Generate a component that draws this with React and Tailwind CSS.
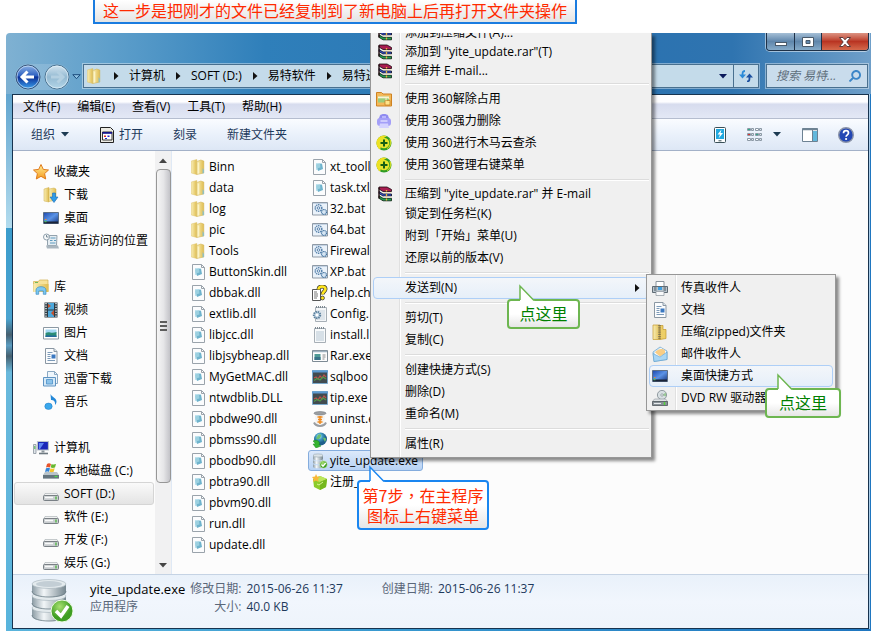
import { FaSearch } from "react-icons/fa";

const Gradients = () => (
  <svg className="absolute h-0 w-0" aria-hidden="true">
    <defs>
      <linearGradient id="folder" x1="0" x2="1">
        <stop offset="0" stopColor="#f9eeb4" />
        <stop offset="1" stopColor="#dfbc50" />
      </linearGradient>
      <linearGradient id="orb" x1="0" y1="0" x2="0" y2="1">
        <stop offset="0" stopColor="#8fb4e6" />
        <stop offset=".45" stopColor="#2c5fc0" />
        <stop offset=".5" stopColor="#0c2f96" />
        <stop offset="1" stopColor="#3ba2ee" />
      </linearGradient>
      <linearGradient id="orbOff" x1="0" y1="0" x2="0" y2="1">
        <stop offset="0" stopColor="#d5e6f0" />
        <stop offset=".5" stopColor="#94bad2" />
        <stop offset="1" stopColor="#b4d6e8" />
      </linearGradient>
      <linearGradient id="screen" x1="0" y1="0" x2="1" y2="1">
        <stop offset="0" stopColor="#1c48ad" />
        <stop offset=".5" stopColor="#5b93e6" />
        <stop offset="1" stopColor="#16357c" />
      </linearGradient>
      <linearGradient id="metal" x1="0" x2="1">
        <stop offset="0" stopColor="#8a9aa3" />
        <stop offset=".35" stopColor="#f2f6f8" />
        <stop offset="1" stopColor="#75868f" />
      </linearGradient>
      <linearGradient id="star" x1="0" y1="0" x2="0" y2="1">
        <stop offset="0" stopColor="#fff09a" />
        <stop offset="1" stopColor="#f59a1c" />
      </linearGradient>
      <linearGradient id="note" x1="0" y1="0" x2="0" y2="1">
        <stop offset="0" stopColor="#1c6fc4" />
        <stop offset="1" stopColor="#3fb0f0" />
      </linearGradient>
      <radialGradient id="globe" cx=".4" cy=".3">
        <stop offset="0" stopColor="#d8f2ff" />
        <stop offset=".5" stopColor="#3f9bc0" />
        <stop offset="1" stopColor="#1d5f8c" />
      </radialGradient>
      <radialGradient id="tick" cx=".4" cy=".3">
        <stop offset="0" stopColor="#a8e070" />
        <stop offset="1" stopColor="#3f9e22" />
      </radialGradient>
    </defs>
  </svg>
);

const Svg = ({ children, className = "h-4 w-4" }) => (
  <svg viewBox="0 0 16 16" className={`${className} shrink-0`} fill="none" aria-hidden="true">
    {children}
  </svg>
);

const icons = {
  folder: (
    <>
      <path d="M.300 2l5.500-1.500v15L.300 14z" fill="url(#folder)" stroke="#dcc269" strokeWidth=".5" />
      <path d="M5.800 2.500l4-1.500 3 1v12l-7 1.500z" fill="url(#folder)" stroke="#cfae4c" strokeWidth=".5" />
      <path d="M7.500 3.500v11" stroke="#fbf3c8" strokeWidth="1.500" />
      <path d="M11.500 9l1.500 2v3l-1.500.500z" fill="#8fc0c4" />
    </>
  ),
  dll: (
    <>
      <path d="M1.500 .500h9l3 3v12h-12z" fill="#fbfcfd" stroke="#9aa3ab" />
      <path d="M10.500 .500v3h3" stroke="#9aa3ab" />
      <path d="M4 4h5v7H4z" fill="#bfe2ee" />
      <path d="M5 6l5-1.500 1 5.500-5 2z" fill="#6fb3cc" />
      <path d="M4 5.500l4-1 .5 4-4 1z" fill="#9bd0e0" />
    </>
  ),
  bat: (
    <>
      <path d="M.500 1.500h15v12.500h-15z" fill="#eaf2fa" stroke="#8f9aa6" />
      <path d="M1 2.500h14" stroke="#c3d3e4" />
      <circle cx="6.500" cy="7" r="3.300" stroke="#5a84ad" strokeWidth="1.500" strokeDasharray="1.400 .700" />
      <circle cx="6.500" cy="7" r="1.300" stroke="#5a84ad" />
      <circle cx="12" cy="11" r="2.500" fill="#d6e6f4" stroke="#44739f" strokeWidth="1.200" strokeDasharray="1.200 .500" />
    </>
  ),
  help: (
    <>
      <path d="M.500 4.500h8v11h-8z" fill="#fff" stroke="#555" />
      <path d="M2 7h3M2 9h4M2 11h4M2 13h3" stroke="#777" />
      <path d="M6.500 4.500c0-4 7-4 7-.500 0 2.500-3 2.500-3 5.500" stroke="#333" strokeWidth="4" />
      <path d="M6.500 4.500c0-4 7-4 7-.500 0 2.500-3 2.500-3 5.500" stroke="#ffe51f" strokeWidth="2.600" />
      <circle cx="10.500" cy="13" r="1.900" fill="#ffe51f" stroke="#333" strokeWidth=".800" />
    </>
  ),
  config: (
    <>
      <path d="M3.500 1.500h11v14h-11z" fill="#f4f6f8" stroke="#a7afb6" />
      <path d="M4 1h10" stroke="#7e8991" strokeWidth="2" strokeDasharray="1 1" />
      <path d="M5 5h8M5 7h8M5 9h8M5 11h8M5 13h8" stroke="#b5c6d4" strokeWidth=".700" />
      <circle cx="5" cy="9" r="3.200" fill="#c6d9e8" stroke="#5a7f9c" strokeWidth="2" strokeDasharray="1.400 .800" />
      <circle cx="5" cy="9" r="1.200" fill="#fff" />
    </>
  ),
  text: (
    <>
      <path d="M2.500 1.500h11v14h-11z" fill="#f8fafb" stroke="#a7afb6" />
      <path d="M3 1h10" stroke="#7e8991" strokeWidth="2" strokeDasharray="1 1" />
      <path d="M4 5h8M4 7h8M4 9h8M4 11h8M4 13h8" stroke="#a5b9ca" strokeWidth=".800" />
    </>
  ),
  rarExe: (
    <>
      <path d="M.500 2.500h15v11h-15z" fill="#fdfdfd" stroke="#7d8a94" />
      <path d="M1 3.500h14" stroke="#9fb2c0" strokeWidth="1.500" />
      <path d="M2.500 6h6v6h-6z" fill="#4f9a96" />
      <path d="M2.500 9h6v3h-6z" fill="#397388" />
      <path d="M10.500 7h3M10.500 9h3M10.500 11h2" stroke="#888" />
    </>
  ),
  chart: (
    <>
      <path d="M.500 1.500h15v13h-15z" fill="#414b50" stroke="#7aa9cc" />
      <path d="M0 2.500h16" stroke="#5c9ad1" strokeWidth="2" />
      <path d="M2 9l2-1 2 2 2-3 2 2 2-3 2 2" stroke="#b9534a" strokeWidth="1.200" />
      <path d="M2 11.500l3-2 3 1.500 3-3 3 2" stroke="#4f9a4a" strokeWidth="1.200" />
    </>
  ),
  uninst: (
    <>
      <ellipse cx="8" cy="2.300" rx="6" ry="1.800" fill="#9a9ea2" stroke="#6d7276" strokeWidth=".500" />
      <path d="M3 5l1 8h8l1-8z" fill="#f4f4f4" />
      <path d="M5.500 6h5M6 8.500h4M5.500 11h5M8 5v8" stroke="#ef8a1d" strokeWidth="1.500" />
      <path d="M2 11.500c2 4.500 10 4.500 12 0" stroke="#9a9ea2" strokeWidth="2" />
    </>
  ),
  update: (
    <>
      <circle cx="8.500" cy="7" r="6.500" fill="url(#globe)" />
      <path d="M6 3c3-2 4 1 2 3s-2 1-4 1zM11 6c3-1 4 1 2 4z" fill="#6cc26b" />
      <path d="M1 9c4-2 8 1 6 4l2 1-5 2-3-4 2 0c0-1-1-2-2-3z" fill="#35b32f" stroke="#1c8d1c" strokeWidth=".500" />
    </>
  ),
  database: (
    <>
      <path d="M1 2.500v3.500c0 2 10 2 10 0V2.500z" fill="url(#metal)" />
      <path d="M1 6.800v3c0 2 10 2 10 0v-3c0 2-10 2-10 0z" fill="url(#metal)" />
      <path d="M1 10.800v3c0 2 10 2 10 0v-3c0 2-10 2-10 0z" fill="url(#metal)" />
      <ellipse cx="6" cy="2.500" rx="5" ry="1.600" fill="#dbe3e7" stroke="#8b9aa3" strokeWidth=".500" />
      <circle cx="11.500" cy="11.500" r="3.800" fill="url(#tick)" stroke="#e8f8df" strokeWidth=".500" />
      <path d="M9.500 11.500l1.500 1.700 2.700-3.200" stroke="#fff" strokeWidth="1.300" />
    </>
  ),
  register: (
    <>
      <path d="M1 5l7-3 7 3-1 8-6 3-6-3z" fill="#8ccb2a" />
      <path d="M1 5l7 3 7-3-7-3z" fill="#bce65c" />
      <path d="M8 8l7-3-1 8-6 3z" fill="#76b81e" />
      <path d="M4 0l1.200 2.500L8 3 6 5l.5 3L4 6.500 1 8l.700-3L0 3l3-.500z" fill="#f8b838" />
      <path d="M5 10l2 1 4-3" stroke="#d9f59a" />
    </>
  ),
  star: <path d="M8 .500l2.300 4.900 5.200.600-3.900 3.600 1.100 5.400-4.700-2.700L3.300 15l1.100-5.400L.500 6l5.200-.600z" fill="url(#star)" stroke="#e07b1c" />,
  download: (
    <>
      <path d="M1 2l5-1.500v14.500l-5-1z" fill="url(#folder)" stroke="#cfae4c" strokeWidth=".500" />
      <path d="M6 2l5-1 2 1v11l-7 1.500z" fill="url(#folder)" stroke="#cfae4c" strokeWidth=".500" />
      <path d="M9.500 6h3v4h2.500l-4 5.500-4-5.500h2.500z" fill="#2f9be8" stroke="#1a6db8" strokeWidth=".600" />
    </>
  ),
  desktop: (
    <>
      <path d="M.500 2.500h15v11h-15z" fill="url(#screen)" stroke="#5d6f86" />
      <path d="M1 12.500h14" stroke="#1b2438" strokeWidth="2" />
      <path d="M1.500 11.500h2" stroke="#4fc05e" strokeWidth="1.500" />
      <path d="M2 9.500h1.500" stroke="#f08a2c" />
    </>
  ),
  recent: (
    <>
      <path d="M4.500 2.500h9.500l-.500 10h-9z" fill="#e5edf2" stroke="#93a2ad" />
      <path d="M3 12.500h12l1 3H4z" fill="#aab6bf" />
      <circle cx="3.500" cy="4" r="3" fill="#f7f9fa" stroke="#8fa0ac" />
      <path d="M3.500 2v2h2" stroke="#5d7483" strokeWidth=".800" />
      <path d="M7.500 5h5M7 7.500h2.500M11 7.500h2M7 10h5.500" stroke="#5f9cc0" strokeWidth="1.200" />
    </>
  ),
  library: (
    <>
      <path d="M.500 2.500h5l1-1.500h8.500v11.500H.500z" fill="#f6e29a" stroke="#d3b04d" strokeWidth=".700" />
      <path d="M2 3.500h3" stroke="#74b95c" />
      <path d="M.500 5h15v8h-15z" fill="url(#folder)" />
      <path d="M3 15.300v-4.300c0-4.500 10-4.500 10 0v4.300h-2.700V12H5.700v3.300z" fill="#7cc7f0" stroke="#2c83bd" strokeWidth=".600" />
    </>
  ),
  video: (
    <>
      <path d="M1.500 .500h13v15h-13z" fill="#2c3a42" />
      <path d="M5 1h6v6.500h-6zM5 8.500h6v6.500h-6z" fill="#4ba8dc" />
      <path d="M5 1.500l3 2.500-3 2zM11 8l-3 3 3 3z" fill="#c2512e" />
      <path d="M3 1v14M13 1v14" stroke="#e8eef0" strokeWidth="1.400" strokeDasharray="1.300 1.200" />
    </>
  ),
  picture: (
    <>
      <path d="M.500 2.500h15v11.500h-15z" fill="#fff" stroke="#8c99a3" />
      <path d="M2.500 4.500h11v3.500h-11z" fill="#a4d8f4" />
      <path d="M2.500 8c4-2 5 1 11-1v5h-11z" fill="#2b8d76" />
      <path d="M2.500 10.500c4-1 7 .500 11 0v1.500h-11z" fill="#236a9c" />
    </>
  ),
  doc: (
    <>
      <path d="M2.500 .500h8.500l3 3v12h-11.500z" fill="#fbfcfd" stroke="#8a97a3" />
      <path d="M11 .500v3h3" fill="#dbe5ec" stroke="#8a97a3" />
      <path d="M4.500 4.500h5M4.500 6.500h3M4.500 8.500h3M4.500 10.500h3M4.500 12.500h7.500" stroke="#6d8eb0" strokeWidth=".900" />
      <path d="M8.500 6.500h4v4h-4z" fill="#3a78c0" />
    </>
  ),
  thunder: (
    <>
      <path d="M4.500 .500h7l3 3v9h-10z" fill="#eef6fc" stroke="#8ba9c3" />
      <path d="M11.500 .500v3h3" stroke="#8ba9c3" />
      <path d="M.500 6.500h12v8.500h-12z" fill="#d5e9f7" stroke="#5e93c2" />
      <path d="M3.500 8.500h6v4.500h-6z" fill="#8cc3ea" stroke="#4c8fc8" strokeWidth=".800" />
    </>
  ),
  music: (
    <>
      <path d="M8.200 .500v11.500" stroke="url(#note)" strokeWidth="1.800" />
      <path d="M7.500 0c1 3 6.500 4 6 8-.5 2-1 2-1.500 3 .5-4-1.500-5-4-5z" fill="#2388d8" />
      <ellipse cx="5.500" cy="12.300" rx="3.700" ry="3.200" fill="#3ba8ec" stroke="#1d78c4" strokeWidth=".500" />
    </>
  ),
  computer: (
    <>
      <path d="M4.500 1.500h11v8.500h-11z" fill="#1a27b8" stroke="#bcc5cb" strokeWidth="1.200" />
      <path d="M6 3l5 0-4 6H6z" fill="#5f86f0" />
      <path d="M8.500 10.500h3v2h-3z" fill="#8c969d" />
      <path d="M6 13.500h9" stroke="#6d7880" strokeWidth="1.600" />
      <path d="M.500 4.500h2.500v9h-2.500z" fill="#dfe5e9" stroke="#8b969e" strokeWidth=".800" />
      <path d="M1.800 6v3" stroke="#48b848" />
    </>
  ),
  systemDrive: (
    <>
      <path d="M2 9h12l2 3v3.500H0V12z" fill="#b9c4ca" />
      <path d="M0 12h16v3.500H0z" fill="#65757e" />
      <path d="M4 1c2-1.500 3-.500 4 0L7 4.500c-2-1-3-.500-4 0z" fill="#e8542a" />
      <path d="M8.500 1c2 .800 3 .500 4.500 0l-1 3.500c-1.500.700-3 .500-4.300 0z" fill="#66b82e" />
      <path d="M3 5.300c2-1 3-.500 4 0L6 9c-1.500-.800-3-.500-4 0z" fill="#3485d8" />
      <path d="M7.500 5.300c2 .800 3 .500 4.200 0l-1 3.500c-1.500.700-3 .500-4.200 0z" fill="#f7c42a" />
      <path d="M11.500 13.500h3" stroke="#4fd54c" strokeWidth="1.300" />
    </>
  ),
  drive: (
    <>
      <path d="M2 7.500h12l1.500 3h-15z" fill="#f0f1f2" stroke="#a5abaf" strokeWidth=".600" />
      <rect x=".5" y="9.500" width="15" height="5" rx="1" fill="#c9cdd0" stroke="#6e757a" strokeWidth=".900" />
      <path d="M2 11.500h8" stroke="#f9fafa" strokeWidth="1.500" />
      <path d="M13 10.500v3" stroke="#4cb43e" strokeWidth="1.300" />
    </>
  ),
  openExe: (
    <>
      <path d="M1.500 .500h10l3 3v12h-13z" fill="#ecebe4" stroke="#222" />
      <path d="M3.500 5h9.500v8H3.500z" fill="#fff" stroke="#222" strokeWidth=".900" />
      <path d="M3.500 5h9.500v1.800H3.500z" fill="#15158c" />
      <path d="M5 8.500h2v1.500h-2z" fill="#d22" />
      <path d="M8.500 8.500h2v1.500h-2zM6 11h2v1h-2z" fill="#22c" />
    </>
  ),
  rar: (
    <>
      <path d="M3 1h8l4.500 2.500v2H7L3 3z" fill="#a81c50" stroke="#1c0a10" strokeWidth=".800" />
      <path d="M3 5.500L7 8h8.500v2H7L3 7.500z" fill="#3656d6" stroke="#0c0c1c" strokeWidth=".800" />
      <path d="M3 9.800l4 2.500h8.500v2.500H7l-4-2.500z" fill="#1f9c50" stroke="#0a1c0c" strokeWidth=".800" />
      <path d="M7.500 6.500h8M7.500 11h8" stroke="#f2e4c6" />
      <path d="M3 1.500v11" stroke="#241014" strokeWidth="1.400" />
      <path d="M10.500 4v1.500M10.500 8v2M10.500 12.500v2" stroke="#e8b53c" strokeWidth="1.300" />
    </>
  ),
  unlock: (
    <>
      <path d="M.500 1.500h5l1.500 1.500h8.500v12H.500z" fill="#f3b95a" stroke="#cf8222" />
      <path d="M2 5.500h11v6H2z" fill="#9ccc7a" />
      <path d="M2 5.500h11v1.800H2z" fill="#f8f3d6" />
      <path d="M9 9.500h5v4.500H9z" fill="#ffe48a" stroke="#c17a1a" strokeWidth=".700" />
      <path d="M10 9.500V8c0-2 3-2 3 0" stroke="#fff3c0" />
    </>
  ),
  shred: (
    <>
      <path d="M4 2.500c1-2 7-2 8 0l1.500 4h-11z" fill="#8f8bf0" />
      <rect x="1" y="5" width="14" height="8" rx="3" fill="#a49ff8" />
      <path d="M4 10.500h8l1 4.500H3z" fill="#d4d2ff" />
      <path d="M4.500 8h7" stroke="#dcdaff" strokeWidth="1.500" />
      <path d="M6 4h4" stroke="#c9c6ff" strokeWidth="1.500" />
    </>
  ),
  shield: (
    <>
      <circle cx="8" cy="8" r="7.500" fill="#2f9c25" />
      <path d="M.700 10A7.500 7.500 0 0 1 11 1.200C8 2 5 5 5 8s0 5-1 6.500A8 8 0 0 1 .700 10z" fill="#f0e020" />
      <circle cx="8" cy="8" r="5.300" fill="#e6e52c" />
      <path d="M11 13c3-2 4-6 2-9l2 1c1 4-1 8-4 9z" fill="#c6d820" />
      <path d="M8 4.500v7M4.500 8h7" stroke="#146014" strokeWidth="2" />
    </>
  ),
  fax: (
    <>
      <path d="M4 1.500h8v5h-8z" fill="#fff" stroke="#8a949c" />
      <path d="M.500 6.500h15v6h-15z" fill="#b9c4cc" stroke="#5f6b74" />
      <path d="M6 7h4v3h-4z" fill="#3f9fe0" />
      <path d="M2 8h2.500M2 10h2.500M11.500 8h2.500M11.500 10h2.500" stroke="#4d5962" strokeWidth="1.200" />
      <path d="M4 11.500h8v4h-8z" fill="#f8f9fa" stroke="#8a949c" strokeWidth=".700" />
    </>
  ),
  zip: (
    <>
      <path d="M1 1h7v14.500h-7z" fill="url(#folder)" stroke="#c49a2c" strokeWidth=".700" />
      <path d="M8 1.500h3v4h3v9l-6 1z" fill="#edcf68" stroke="#c49a2c" strokeWidth=".700" />
      <path d="M7.500 1v14" stroke="#7f7458" strokeWidth="2.500" strokeDasharray="1.200 1" />
    </>
  ),
  mail: (
    <>
      <path d="M1 6l7-5 7 4v8.500l-13 2z" fill="#cfe7f8" stroke="#6ca4cc" strokeWidth=".700" />
      <path d="M3 6l6-4 5 3.500v3l-6 3-5-3z" fill="#fff" />
      <path d="M3 6.500c2-3 7-5 10-2v3l-5 3z" fill="#f8cd85" />
      <path d="M1 7.500l7 3.500 7-5v7.500l-13 2z" fill="#a9d6f4" stroke="#5b9ccb" strokeWidth=".600" />
    </>
  ),
  dvd: (
    <>
      <circle cx="10" cy="5" r="4.600" fill="#d8dfe2" stroke="#7d898f" strokeWidth=".800" />
      <path d="M10 5l4-2.500v4z" fill="#9ac796" />
      <circle cx="10" cy="5" r="1.200" fill="#fff" stroke="#7d898f" strokeWidth=".700" />
      <path d="M2.500 9h11l2 2.500h-15z" fill="#dfe3e5" stroke="#8e959a" strokeWidth=".600" />
      <path d="M.500 11.500h15v4h-15z" fill="#8a9298" stroke="#4e565b" strokeWidth=".800" />
      <path d="M2 13.500h7" stroke="#e8ebed" />
      <path d="M12.500 12v3" stroke="#54d23c" strokeWidth="1.500" />
    </>
  ),
};

const Icon = ({ name, className }) => <Svg className={className}>{icons[name]}</Svg>;

const DatabaseLarge = () => (
  <svg viewBox="0 0 44 46" className="h-[46px] w-11 shrink-0" fill="none" aria-hidden="true">
    {[28, 16, 4].map((y) => (
      <g key={y}>
        <path d={`M1 ${y + 2}v8c0 7 34 7 34 0v-8z`} fill="url(#metal)" />
        <path d={`M1 ${y + 9}c0 8 34 8 34 0`} stroke="#6c7d86" strokeWidth=".8" />
        <ellipse cx="18" cy={y + 2} rx="17" ry="4.5" fill="#e3eaed" stroke="#a3b0b8" strokeWidth=".6" />
      </g>
    ))}
    <ellipse cx="18" cy="6" rx="13" ry="3" fill="#c3ced5" />
    <circle cx="31" cy="33" r="11" fill="url(#tick)" stroke="#eefae6" />
    <path d="M25 33l5 5 7-10" stroke="#fff" strokeWidth="3.5" />
  </svg>
);

const Caret = ({ className = "text-[#1c3a52]" }) => (
  <svg viewBox="0 0 8 5" className={`h-[5px] w-2 shrink-0 ${className}`} aria-hidden="true">
    <path d="M0 0h8l-4 4.500z" fill="currentColor" />
  </svg>
);

const ArrowRight = () => (
  <svg viewBox="0 0 5 8" className="h-2 w-[5px] shrink-0" aria-hidden="true">
    <path d="M0 0l4.500 4-4.500 4z" fill="#111" />
  </svg>
);

const crumbs = ["计算机", "SOFT (D:)", "易特软件", "易特进"];
const menus = ["文件(F)", "编辑(E)", "查看(V)", "工具(T)", "帮助(H)"];

const groups = [
  {
    title: "收藏夹",
    icon: "star",
    items: [
      ["download", "下载"],
      ["desktop", "桌面"],
      ["recent", "最近访问的位置"],
    ],
  },
  {
    title: "库",
    icon: "library",
    items: [
      ["video", "视频"],
      ["picture", "图片"],
      ["doc", "文档"],
      ["thunder", "迅雷下载"],
      ["music", "音乐"],
    ],
  },
  {
    title: "计算机",
    icon: "computer",
    items: [
      ["systemDrive", "本地磁盘 (C:)"],
      ["drive", "SOFT (D:)"],
      ["drive", "软件 (E:)"],
      ["drive", "开发 (F:)"],
      ["drive", "娱乐 (G:)"],
    ],
  },
];

const folders = ["Binn", "data", "log", "pic", "Tools"].map((n) => ["folder", n]);
const dlls = [
  "ButtonSkin.dll", "dbbak.dll", "extlib.dll", "libjcc.dll", "libjsybheap.dll",
  "MyGetMAC.dll", "ntwdblib.DLL", "pbdwe90.dll", "pbmss90.dll", "pbodb90.dll",
  "pbtra90.dll", "pbvm90.dll", "run.dll", "update.dll",
].map((n) => ["dll", n]);

const otherFiles = [
  ["dll", "xt_tooll"],
  ["dll", "task.txl"],
  ["bat", "32.bat"],
  ["bat", "64.bat"],
  ["bat", "Firewall"],
  ["bat", "XP.bat"],
  ["help", "help.ch"],
  ["config", "Config."],
  ["text", "install.l"],
  ["rarExe", "Rar.exe"],
  ["chart", "sqlboo"],
  ["chart", "tip.exe"],
  ["uninst", "uninst.e"],
  ["update", "update"],
  ["database", "yite_update.exe"],
  ["register", "注册_"],
];

// null draws a separator
const contextMenu = [
  { icon: "rar", label: "添加到压缩文件(A)...", short: true },
  { icon: "rar", label: '添加到 "yite_update.rar"(T)', short: true },
  { icon: "rar", label: "压缩并 E-mail...", short: true },
  null,
  { icon: "unlock", label: "使用 360解除占用" },
  { icon: "shred", label: "使用 360强力删除" },
  { icon: "shield", label: "使用 360进行木马云查杀" },
  { icon: "shield", label: "使用 360管理右键菜单" },
  null,
  { icon: "rar", label: '压缩到 "yite_update.rar" 并 E-mail', short: true },
  { label: "锁定到任务栏(K)" },
  { label: "附到「开始」菜单(U)" },
  { label: "还原以前的版本(V)" },
  null,
  { label: "发送到(N)", active: true, sub: true },
  null,
  { label: "剪切(T)" },
  { label: "复制(C)" },
  null,
  { label: "创建快捷方式(S)" },
  { label: "删除(D)" },
  { label: "重命名(M)" },
  null,
  { label: "属性(R)" },
];

const sendTo = [
  { icon: "fax", label: "传真收件人" },
  { icon: "doc", label: "文档" },
  { icon: "zip", label: "压缩(zipped)文件夹" },
  { icon: "mail", label: "邮件收件人" },
  { icon: "desktop", label: "桌面快捷方式", active: true },
  { icon: "dvd", label: "DVD RW 驱动器" },
];

const MenuItem = ({ item }) => {
  if (!item) {
    return (
      <li role="separator" className="flex h-2 items-center pl-8">
        <div className="h-[2px] w-full border-t border-[#dcdcdc] bg-white" />
      </li>
    );
  }
  return (
    <li>
      <button
        className={`flex w-full items-center whitespace-nowrap rounded-sm border pl-[2px] pr-2 text-left ${
          item.short ? "h-[19px]" : "h-[22px]"
        } ${item.active ? "border-[#aecff7] bg-gradient-to-b from-[#f3f6fa] to-[#e6eff9]" : "border-transparent"}`}
      >
        <span className="mr-[13px] flex w-4 shrink-0 justify-center">{item.icon && <Icon name={item.icon} />}</span>
        <span className="flex-1">{item.label}</span>
        {item.sub && <ArrowRight />}
      </button>
    </li>
  );
};

const MenuGutter = () => <div className="absolute inset-y-0 left-7 w-[2px] border-l border-[#e0e0e0] bg-white" />;

const Callout = ({ className, tone, children }) => {
  const blue = tone === "blue";
  return (
    <div
      className={`absolute rounded border-2 bg-gradient-to-b from-white via-white to-[#e6e6e6] text-center ${
        blue ? "border-[#1a86f0] text-[#ff2a00]" : "border-[#6db650] text-[#008000]"
      } ${className}`}
    >
      <svg viewBox="0 0 20 18" className="absolute -top-[17px] left-[10px] h-[18px] w-5" aria-hidden="true">
        <path d="M1 17.500V2l15 15.500z" fill="#fff" />
        <path d="M1 16V2l14 14.500" fill="none" stroke={blue ? "#1a86f0" : "#6db650"} strokeWidth="1.500" />
      </svg>
      {children}
    </div>
  );
};

const FileColumn = ({ files, className }) => (
  <ul className={className}>
    {files.map(([icon, name]) => {
      const selected = name === "yite_update.exe";
      return (
        <li key={name}>
          <button
            className={`flex h-[21px] items-center gap-[2px] whitespace-nowrap border pl-[3px] pr-1 ${
              selected
                ? "rounded-[3px] border-[#84acdd] bg-gradient-to-b from-[#dce9fa] to-[#b8d3f5]"
                : "border-transparent"
            }`}
          >
            <Icon name={icon} />
            <span>{name}</span>
          </button>
        </li>
      );
    })}
  </ul>
);

const TitleBar = () => (
  <header className="rounded-tl bg-[linear-gradient(to_right,#7fb1d2,#5e9fcb_12%,#2f7fba_30%,#2a72b0_70%,#2f74b0_84%,#6f9fc9)]">
    <div className="flex h-[31px] items-start justify-end pr-[2px]">
      <div className="flex h-[18px] overflow-hidden rounded-b border border-t-0 border-[#1e3148] ring-1 ring-white/50">
        <button aria-label="最小化" className="flex w-7 items-center justify-center border-r border-[#1e3148] bg-gradient-to-b from-[#a5bfd6] via-[#5f86ab] to-[#86abc9]">
          <span className="mt-1 h-1 w-3 border border-[#4a5a6a] bg-white" />
        </button>
        <button aria-label="最大化" className="flex w-[27px] items-center justify-center border-r border-[#1e3148] bg-gradient-to-b from-[#a5bfd6] via-[#5f86ab] to-[#86abc9]">
          <svg viewBox="0 0 12 10" className="h-[10px] w-3" aria-hidden="true">
            <path d="M.500 .500h11v9h-11zM4 3.500h4v3h-4z" fill="#fff" fillRule="evenodd" stroke="#4a5a6a" />
          </svg>
        </button>
        <button aria-label="关闭" className="flex w-[46px] items-center justify-center bg-gradient-to-b from-[#dc9383] via-[#b93422] to-[#d5694c]">
          <svg viewBox="0 0 12 10" className="h-[10px] w-3" aria-hidden="true">
            <path d="M.500 .500h3.500l2 2.300 2-2.300h3.500l-3.700 4.500 3.700 4.500h-3.500l-2-2.300-2 2.300h-3.500l3.700-4.500z" fill="#fff" stroke="#5d3a3a" />
          </svg>
        </button>
      </div>
    </div>
    <div className="flex h-[30px] items-start pl-[9px] pr-[3px]">
      <div className="flex items-center gap-[3px] rounded-full bg-white/15">
        <button aria-label="后退">
          <svg viewBox="0 0 26 26" className="h-[26px] w-[26px]">
            <circle cx="13" cy="13" r="12" fill="url(#orb)" stroke="#39557a" />
            <circle cx="13" cy="13" r="11" fill="none" stroke="#cfe2f5" strokeOpacity=".700" />
            <path d="M12.500 7.500L7 13l5.500 5.500M8 13h11" stroke="#fff" strokeWidth="3" fill="none" />
          </svg>
        </button>
        <button aria-label="前进">
          <svg viewBox="0 0 26 26" className="h-[26px] w-[26px]">
            <circle cx="13" cy="13" r="12" fill="url(#orbOff)" stroke="#4b7391" />
            <circle cx="13" cy="13" r="11" fill="none" stroke="#e3f1f9" strokeOpacity=".700" />
            <path d="M13.500 7.500L19 13l-5.500 5.500M18 13h-11" stroke="#b4d0e1" strokeWidth="3" fill="none" />
          </svg>
        </button>
      </div>
      <button aria-label="最近的页面" className="flex h-[26px] w-[13px] items-center justify-center">
        <svg viewBox="0 0 9 6" className="h-[6px] w-[9px]">
          <path d="M.800 .700h7.400l-3.700 4z" fill="#8fc3e4" stroke="#1b4c7c" />
        </svg>
      </button>
      <div className="flex h-[24px] min-w-0 flex-1 border border-[#49708f] bg-[#c4dbea] ring-1 ring-white/40">
        <nav className="flex min-w-0 flex-1 items-center overflow-hidden pl-[3px]">
          <Icon name="folder" />
          <ol className="flex">
            {crumbs.map((c) => (
              <li key={c} className="flex items-center gap-[10px] whitespace-nowrap pl-[11px]">
                <ArrowRight />
                <button>{c}</button>
              </li>
            ))}
          </ol>
        </nav>
        <button aria-label="地址历史" className="flex w-5 items-center justify-center">
          <Caret className="text-[#0a1a5c]" />
        </button>
        <button aria-label="刷新" className="flex w-[25px] items-center justify-center border-l border-[#49708f]">
          <svg viewBox="0 0 14 12" className="h-3 w-[14px]">
            <path d="M6 1C3.500 1 3.500 2.500 3.500 6" stroke="#2a8ad8" strokeWidth="1.800" fill="none" />
            <path d="M0 4.500h7L3.500 8.500z" fill="#2a8ad8" />
            <path d="M8 11.500c2.500 0 2.500-1.500 2.500-5" stroke="#1c50a0" strokeWidth="1.800" fill="none" />
            <path d="M7 7.500h7l-3.500-4z" fill="#1c50a0" />
          </svg>
        </button>
      </div>
      <label className="ml-[7px] flex h-[24px] w-[102px] items-center border border-[#49708f] bg-[#c9dcec] pl-[9px] pr-[6px] ring-1 ring-white/40">
        <input aria-label="搜索" placeholder="搜索 易特..." className="w-0 min-w-0 flex-1 bg-transparent italic outline-none placeholder:text-[#5f6f7c]" />
        <FaSearch className="-scale-x-100 text-[12px] text-[#3b86c8]" />
      </label>
    </div>
  </header>
);

const Toolbar = () => (
  <div className="flex h-8 items-center justify-between border-b border-[#a3b1c8] bg-gradient-to-b from-[#fafcff] via-[#eaf1fb] to-[#dde7f5] pl-[18px] pr-[14px] text-[#1e395b]">
    <div className="flex items-center gap-[30px]">
      <button className="flex items-center gap-[6px]">
        组织 <Caret />
      </button>
      <button className="flex items-center gap-1">
        <Icon name="openExe" />
        打开
      </button>
      <button>刻录</button>
      <button>新建文件夹</button>
    </div>
    <div className="flex items-center">
      <button aria-label="手机助手" className="mr-[21px]">
        <svg viewBox="0 0 12 16" className="h-4 w-3">
          <rect x=".500" y=".500" width="11" height="15" rx="1" fill="#fff" stroke="#3a5058" />
          <path d="M2 2h8v10h-8z" fill="#22a9e0" />
          <path d="M7.500 2.500l-4 5h2.500l-1.500 4 4.500-5.500h-2.500z" fill="#fff" />
          <path d="M4.500 13.800h3" stroke="#3a5058" />
        </svg>
      </button>
      <button aria-label="更改视图" className="mr-[21px] flex items-center gap-[10px]">
        <svg viewBox="0 0 16 13" className="h-[13px] w-4" fill="none">
          {[0, 5, 10].map((y) => (
            <g key={y}>
              <path d={`M.5 ${y + 0.5}h3v2h-3zM8.5 ${y + 0.5}h3v2h-3z`} fill="#fff" stroke="#8b98a5" />
              <path d={`M4.5 ${y + 0.5}h2v2h-2zM12.5 ${y + 0.5}h2v2h-2z`} fill="#dde4ea" stroke="#8b98a5" />
            </g>
          ))}
          <path d="M1 6.500h2" stroke="#d33" />
          <path d="M1 1.500h2M9 6.500h2" stroke="#3a8" />
        </svg>
        <Caret />
      </button>
      <button aria-label="预览窗格" className="mr-5">
        <svg viewBox="0 0 16 14" className="h-[14px] w-4">
          <path d="M.500 .500h15v13h-15z" fill="#fff" stroke="#6d8293" />
          <path d="M0 1.500h16" stroke="#6d8293" strokeWidth="1.500" />
          <path d="M11 3h4v10h-4z" fill="#63b8dc" />
          <path d="M10.500 2v12" stroke="#6d8293" />
        </svg>
      </button>
      <button aria-label="帮助">
        <svg viewBox="0 0 16 16" className="h-4 w-4">
          <circle cx="8" cy="8" r="7.300" fill="#2347b4" stroke="#8a93a8" strokeWidth="1.400" />
          <path d="M5.500 6.200c0-3.400 5-3.200 5-.2 0 1.900-2.400 1.800-2.400 3.800" stroke="#fff" strokeWidth="1.700" fill="none" />
          <circle cx="8.100" cy="12" r="1.100" fill="#fff" />
        </svg>
      </button>
    </div>
  </div>
);

const Sidebar = () => (
  <nav className="flex w-[142px] shrink-0 flex-col gap-[23px] pl-[1px] pr-[1px] pt-[9px]">
    {groups.map((g) => (
      <section key={g.title}>
        <h2 className="flex h-[23px] items-center gap-[5px] pl-[19px]">
          <Icon name={g.icon} />
          {g.title}
        </h2>
        <ul>
          {g.items.map(([icon, name]) => (
            <li key={name}>
              <button
                className={`flex h-[23px] w-full items-center gap-[5px] whitespace-nowrap rounded-[3px] border pl-7 ${
                  name === "SOFT (D:)" ? "border-[#d5d5d5] bg-gradient-to-b from-[#fafafa] to-[#e4e4e4]" : "border-transparent"
                }`}
              >
                <Icon name={icon} />
                {name}
              </button>
            </li>
          ))}
        </ul>
      </section>
    ))}
  </nav>
);

const Scrollbar = () => (
  <div className="flex w-4 shrink-0 flex-col items-center bg-[#f1f1f2]">
    <button aria-label="向上滚动" className="flex h-[18px] items-center">
      <Caret className="rotate-180 text-[#444]" />
    </button>
    <div className="flex w-[15px] flex-[316] flex-col items-center justify-center gap-[2px] rounded-sm border border-[#979797] bg-gradient-to-r from-[#f5f5f5] via-[#e6e6e8] to-[#c3c3c8]">
      <i className="h-[2px] w-[7px] bg-[#5c5c5c]" />
      <i className="h-[2px] w-[7px] bg-[#5c5c5c]" />
      <i className="h-[2px] w-[7px] bg-[#5c5c5c]" />
    </div>
    <div className="flex-[74]" />
    <button aria-label="向下滚动" className="flex h-[18px] items-center">
      <Caret className="text-[#444]" />
    </button>
  </div>
);

const DetailsPane = () => (
  <footer className="flex items-start gap-[15px] border-t border-[#c5d3e4] bg-gradient-to-b from-[#e9f1fa] via-[#f1f6fd] to-[#eef4fb] pb-[4px] pl-[18px] pt-[3px]">
    <DatabaseLarge />
    <div className="grid grid-cols-[auto_auto_auto_auto_auto] items-center gap-x-[5px] whitespace-nowrap pt-[2px] leading-[18px] text-[#1e395b]">
      <span className="text-[13px] text-black">yite_update.exe</span>
      <span className="text-right text-[#5a6779]">修改日期:</span>
      <span>2015-06-26 11:37</span>
      <span className="pl-[34px] text-[#5a6779]">创建日期:</span>
      <span>2015-06-26 11:37</span>
      <span className="text-[#5a6779]">应用程序</span>
      <span className="text-right text-[#5a6779]">大小:</span>
      <span>40.0 KB</span>
    </div>
  </footer>
);

export default function App() {
  return (
    <div className="min-h-screen bg-white font-['Open_Sans','Noto_Sans_CJK_SC',sans-serif] text-[12px] leading-4 text-black">
      <Gradients />
      <div className="flex pl-[93px]">
        <p className="h-6 whitespace-nowrap border-2 border-t-0 border-[#1a7ce0] bg-gradient-to-b from-white to-[#e4e4e4] px-2 text-[16px] leading-[23px] text-[#ff2a00]">
          这一步是把刚才的文件已经复制到了新电脑上后再打开文件夹操作
        </p>
      </div>

      <main className="relative ml-[6px] mr-[5px] mt-[9px]">
        <TitleBar />
        <div className="flex bg-[linear-gradient(to_right,#5ab4dc,#3a9bd0_40%,#1f76c0)] pb-[2px]">
          <div className="w-[6px] shrink-0 bg-[linear-gradient(to_bottom,#62a5cf,#b3dcee_25%,#3b9ccc_25%,#4ba4d0_42%,#47606f_45%,#5b9cc0_47%,#47606f_49%,#6ab9dc_52%,#58b4dc)]" />
          <div className="min-w-0 flex-1 border border-[#17334f] bg-[#fcfcfc]">
            <div className="flex h-6 items-center gap-[17px] border-b border-[#b5bdcf] bg-[linear-gradient(to_bottom,#fdfdff_30%,#d7dcee_40%,#e3e8f5)] pl-[10px]">
              {menus.map((m) => (
                <button key={m}>{m}</button>
              ))}
            </div>
            <Toolbar />
            <div className="flex">
              <Sidebar />
              <Scrollbar />
              <div className="flex min-w-0 flex-1 border-l border-[#dfe9f5] pl-[15px] pt-[5px]">
                <FileColumn files={[...folders, ...dlls]} className="w-[121px]" />
                <FileColumn files={otherFiles} />
              </div>
            </div>
            <DetailsPane />
          </div>
          <div className="w-[2px] shrink-0 border-l border-[#a9cdea]" />
        </div>

        <div className="absolute left-[364px] top-0 w-[282px] overflow-hidden border border-t-0 border-[#979797] bg-[#f0f0f0] pb-[2px] shadow-[3px_3px_3px_rgba(0,0,0,0.45)]">
          <MenuGutter />
          <ul className="relative -mt-[10px] px-[2px]">
            {contextMenu.map((item, i) => (
              <MenuItem key={i} item={item} />
            ))}
          </ul>
        </div>

        <div className="absolute left-[640px] top-[241px] w-[190px] border border-[#979797] bg-[#f0f0f0] px-[2px] pb-[1px] pt-[2px] shadow-[3px_3px_3px_rgba(0,0,0,0.45)]">
          <MenuGutter />
          <ul className="relative">
            {sendTo.map((item) => (
              <MenuItem key={item.label} item={item} />
            ))}
          </ul>
        </div>

        <Callout className="left-[501px] top-[266px] w-[73px] text-[16px] leading-[26px]">点这里</Callout>
        <Callout className="left-[759px] top-[355px] w-[76px] text-[16px] leading-[26px]">点这里</Callout>
        <Callout
          tone="blue"
          className="left-[351px] top-[447px] w-[132px] py-[3px] font-['Noto_Sans_CJK_TC','Noto_Sans_CJK_SC',sans-serif] text-[16px] leading-5"
        >
          第7步，在主程序
          <br />
          图标上右键菜单
        </Callout>
      </main>
    </div>
  );
}
